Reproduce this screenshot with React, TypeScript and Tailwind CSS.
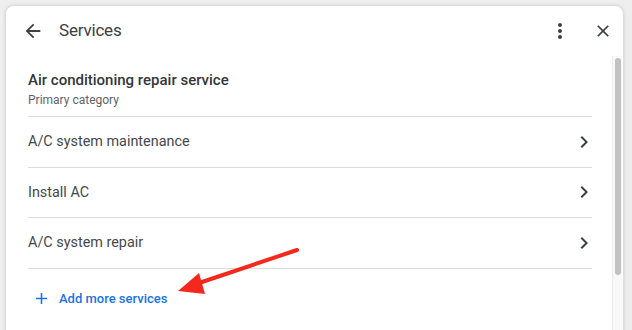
import React from 'react'
import { MdArrowBack, MdMoreVert, MdClose, MdChevronRight, MdAdd } from 'react-icons/md'

const services = ['A/C system maintenance', 'Install AC', 'A/C system repair']

const App = () => {
  return (
    <div
      className="relative w-[632px] h-[330px] overflow-hidden bg-[#eeeeee] pt-[6px] pl-[6px]"
      style={{ fontFamily: 'Roboto, "Noto Sans", sans-serif' }}
    >
      <div className="w-[617px] h-[340px] bg-white rounded-t-[8px] shadow-[0_0_4px_rgba(0,0,0,0.18)] flex flex-col">
        {/* header */}
        <div className="h-[50px] flex items-center pl-[16px] pr-[10px] text-[#3c4043]">
          <MdArrowBack className="w-[22px] h-[22px]" />
          <div className="ml-[15px] text-[17px] tracking-[-0.2px]">Services</div>
          <div className="flex-1" />
          <MdMoreVert className="w-[24px] h-[24px] text-[#3c4043]" />
          <MdClose className="ml-[21px] w-[20px] h-[20px]" />
        </div>

        {/* body */}
        <div className="flex flex-1">
          <div className="flex-1 pl-[22px] pr-[20px]">
            <div className="pt-[14px] pb-[8px] border-b border-[#dadce0]">
              <div className="text-[15px] leading-[20px] font-medium text-[#34363a]">
                Air conditioning repair service
              </div>
              <div className="mt-[2px] text-[12px] leading-[16px] text-[#5f6368]">Primary category</div>
            </div>
            {services.map((s) => (
              <div
                key={s}
                className="h-[50.5px] flex items-center justify-between border-b border-[#dadce0] text-[#45484c]"
              >
                <span className="text-[14.4px] pt-[1px]">{s}</span>
                <MdChevronRight className="w-[24px] h-[24px] text-[#3c4043] -mr-[4px]" />
              </div>
            ))}
            <div className="h-[60px] flex items-center pl-[4px] text-[#1a73e8]">
              <MdAdd className="w-[19px] h-[19px]" />
              <span className="ml-[8px] text-[13px] font-medium">Add more services</span>
            </div>
          </div>

          {/* scrollbar */}
          <div className="w-[10px] mr-[1px] bg-[#f8f8f8] border-l border-[#ececec] pt-[2px]">
            <div className="mx-auto w-[6px] h-[217px] rounded-full bg-[#c1c1c1]" />
          </div>
        </div>
      </div>

      {/* annotation arrow */}
      <svg className="absolute left-0 top-0 pointer-events-none" width="632" height="330">
        <line x1="297" y1="250" x2="196" y2="284" stroke="#f5281e" strokeWidth="4" strokeLinecap="round" />
        <polygon points="178,291 199,273 205,294" fill="#f5281e" />
      </svg>
    </div>
  )
}

export default App
